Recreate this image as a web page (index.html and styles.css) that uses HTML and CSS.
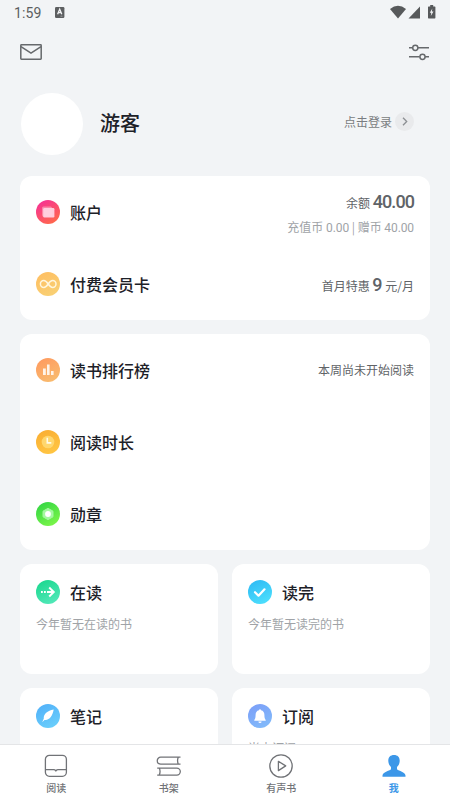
FILE: index.html
```html
<!DOCTYPE html>
<html lang="zh-CN">
<head>
<meta charset="utf-8">
<title>我的</title>
<link rel="stylesheet" href="styles.css">
</head>
<body>
<div class="app">
  <div class="status">
    <span class="time">1:59</span>
    <svg class="badge" width="10" height="11" viewBox="0 0 10 11"><rect width="9.4" height="11" rx="1.2" fill="#5d5f61"/><path d="M2.6 7.2 4.7 2.2l2.1 5M3.4 5.6h2.6" fill="none" stroke="#f3f4f6" stroke-width="1.3"/><path d="M5.5 9.2h2" stroke="#aeb0b2" stroke-width=".8"/></svg>
    <svg class="signals" width="46" height="14" viewBox="0 0 46 14" fill="#57595b"><path d="M0 4Q8-2.4 16 4L8 13.4Z"/><path d="M30 1.6V13.4H18.5Z"/><path d="M38.6 1.5h1.6V0h3v1.5h1.6q.6 0 .6.6V12.8q0 .6-.6.6h-6.200q-.6 0-.6-.6V2.100q0-.6.6-.6Z"/><path d="M42.300 3.500 39.800 7.800h1.500l-.5 3.200 2.700-4.500h-1.600Z" fill="#f3f4f6"/></svg>
  </div>
  <header class="tools">
    <svg width="22" height="16" viewBox="0 0 22 16" fill="none" stroke="#66696c" stroke-width="1.5"><rect x=".8" y=".8" width="20.4" height="14.4" rx=".6"/><path d="m1 2.6 10 6.6 10-6.6"/></svg>
    <svg width="21" height="17" viewBox="0 0 21 17" fill="none" stroke="#66696c" stroke-width="1.5"><path d="M0 3.800h3.700M8.900 3.800h11.100M0 12.800h10.700M16.100 12.800h3.900"/><circle cx="6.3" cy="3.8" r="2.6"/><circle cx="13.500" cy="12.8" r="2.6"/></svg>
  </header>
  <section class="profile">
    <div class="avatar"></div>
    <h1>游客</h1>
    <span class="login">点击登录</span>
    <span class="go"><svg width="6" height="9" viewBox="0 0 6 9" fill="none" stroke="#8c8f93" stroke-width="1.3"><path d="m1 .7 3.7 3.8L1 8.3"/></svg></span>
  </section>
  <section class="card account">
    <div class="row">
      <svg class="icon" viewBox="0 0 24 24"><defs><linearGradient id="pink" x2=".6" y2="1"><stop stop-color="#f52c9c"/><stop offset="1" stop-color="#ff664f"/></linearGradient></defs><circle cx="12" cy="12" r="12" fill="url(#pink)"/><rect x="6" y="6.5" width="10" height="10" rx="1.5" fill="#fff" opacity=".35"/><rect x="7.2" y="8" width="11.2" height="9.5" rx="1.2" fill="#ffd3e2" opacity=".95"/></svg>
      <h2>账户</h2>
      <div class="balance">
        <div class="dark">余额 <b>40.00</b></div>
        <div class="muted">充值币 <i>0.00</i> | 赠币 <i>40.00</i></div>
      </div>
    </div>
    <div class="row">
      <svg class="icon" viewBox="0 0 24 24"><defs><linearGradient id="gold" x2=".5" y2="1"><stop stop-color="#ffbd60"/><stop offset="1" stop-color="#f9cf73"/></linearGradient></defs><circle cx="12" cy="12" r="12" fill="url(#gold)"/><path d="M12.2 12c-1.6-2.3-2.6-3.4-4.4-3.4a3.4 3.4 0 0 0 0 6.8c1.8 0 2.8-1.1 4.4-3.4s2.6-3.4 4.4-3.4a3.4 3.4 0 0 1 0 6.8c-1.8 0-2.8-1.1-4.4-3.4Z" fill="none" stroke="#fff6dd" stroke-width="1.5"/></svg>
      <h2>付费会员卡</h2>
      <div class="dark offer">首月特惠 <b>9</b> 元/月</div>
    </div>
  </section>
  <section class="card stats">
    <div class="row">
      <svg class="icon" viewBox="0 0 24 24"><defs><linearGradient id="orange" x2=".5" y2="1"><stop stop-color="#ff985f"/><stop offset="1" stop-color="#f9b96d"/></linearGradient></defs><circle cx="12" cy="12" r="12" fill="url(#orange)"/><path d="M7 10.5h2.8V17H7zM11 6.5h2.6V17H11zM15 13h2.6v4H15z" fill="#fff4e8"/></svg>
      <h2>读书排行榜</h2>
      <div class="dark">本周尚未开始阅读</div>
    </div>
    <div class="row">
      <svg class="icon" viewBox="0 0 24 24"><defs><linearGradient id="amber" x2=".4" y2="1"><stop stop-color="#f9ac31"/><stop offset="1" stop-color="#ffc442"/></linearGradient></defs><circle cx="12" cy="12" r="12" fill="url(#amber)"/><circle cx="12" cy="12" r="6.3" fill="#ffd76e"/><path d="M11.3 7.8v5.1h4" fill="none" stroke="#fffbea" stroke-width="1.6"/></svg>
      <h2>阅读时长</h2>
    </div>
    <div class="row">
      <svg class="icon" viewBox="0 0 24 24"><defs><linearGradient id="green" x2=".6" y2="1"><stop stop-color="#2cd343"/><stop offset="1" stop-color="#78f449"/></linearGradient></defs><circle cx="12" cy="12" r="12" fill="url(#green)"/><path d="m12 6.300 5 2.900v5.600L12 17.700l-5-2.900V9.200Z" fill="#a4f8a0" stroke="#a4f8a0" stroke-linejoin="round"/><circle cx="12" cy="12" r="2.9" fill="#fff"/></svg>
      <h2>勋章</h2>
    </div>
  </section>
  <section class="grid">
    <article class="card tile">
      <div class="head"><svg class="icon" viewBox="0 0 24 24"><defs><linearGradient id="mint" x2=".5" y2="1"><stop stop-color="#16d68b"/><stop offset="1" stop-color="#4ee7b6"/></linearGradient></defs><circle cx="12" cy="12" r="12" fill="url(#mint)"/><path d="M5 12h1.8M8 12h1.8M11 12h6.4M13.2 7.5l4.6 4.5-4.6 4.5" fill="none" stroke="#fff" stroke-width="1.9"/></svg><h2>在读</h2></div>
      <p>今年暂无在读的书</p>
    </article>
    <article class="card tile">
      <div class="head"><svg class="icon" viewBox="0 0 24 24"><defs><linearGradient id="cyan" x2=".5" y2="1"><stop stop-color="#2bb8f4"/><stop offset="1" stop-color="#4bdcfc"/></linearGradient></defs><circle cx="12" cy="12" r="12" fill="url(#cyan)"/><path d="m7 12.2 3.5 3.5 6-6.4" fill="none" stroke="#fff" stroke-width="2.2" stroke-linecap="round" stroke-linejoin="round"/></svg><h2>读完</h2></div>
      <p>今年暂无读完的书</p>
    </article>
    <article class="card tile">
      <div class="head"><svg class="icon" viewBox="0 0 24 24"><defs><linearGradient id="sky" x2=".5" y2="1"><stop stop-color="#50aff9"/><stop offset="1" stop-color="#68ccfb"/></linearGradient></defs><circle cx="12" cy="12" r="12" fill="url(#sky)"/><path d="M17.7 5.600C11.5 6.700 7.300 10.200 7.800 14.600L6.200 18.200l2.300-2.300c5 .7 7.900-3.900 9.200-10.300Z" fill="#fff"/></svg><h2>笔记</h2></div>
    </article>
    <article class="card tile">
      <div class="head"><svg class="icon" viewBox="0 0 24 24"><defs><linearGradient id="blue" x2=".5" y2="1"><stop stop-color="#7b9df8"/><stop offset="1" stop-color="#81b8fa"/></linearGradient></defs><circle cx="12" cy="12" r="12" fill="url(#blue)"/><path d="M12 5.2a1 1 0 0 1 1 1c2.4.5 3.4 2.3 3.4 4.6 0 2.7.3 4 1.3 5.2v.8H6.3V16c1-1.2 1.3-2.5 1.3-5.2 0-2.3 1-4.1 3.4-4.6a1 1 0 0 1 1-1ZM10.4 17.4h3.2a1.6 1.6 0 0 1-3.2 0Z" fill="#fff"/></svg><h2>订阅</h2></div>
      <p>尚未订阅</p>
    </article>
  </section>
  <nav class="tabs">
    <div class="tab"><svg width="24" height="24" viewBox="0 0 24 24" fill="none" stroke="#717377" stroke-width="1.3"><rect x="1.4" y="1.3" width="21" height="21" rx="4"/><path d="M1.5 15.7h8.2c1.3 0 1.7.5 2.2 1.2.5-.7.9-1.2 2.2-1.2h8.2"/></svg><span>阅读</span></div>
    <div class="tab"><svg width="26" height="24" viewBox="0 0 26 24" fill="none" stroke="#717377" stroke-width="1.3"><path d="M24.500 3.200H4.700a3.400 3.400 0 0 0 0 6.900H24.500M22.300 3.200q-1.500 3.400 0 6.900M1.200 14.100h19.600a3.500 3.500 0 0 1 0 7H1.200M3.300 14.100q1.500 3.500 0 7"/></svg><span>书架</span></div>
    <div class="tab"><svg width="24" height="24" viewBox="0 0 24 24" fill="none" stroke="#717377" stroke-width="1.3"><circle cx="12" cy="12" r="11.2"/><path d="m9.4 7.3 7.3 4.6-7.3 4.7Z" stroke-linejoin="round"/></svg><span>有声书</span></div>
    <div class="tab active"><svg width="24" height="24" viewBox="0 0 24 24"><path d="M12 1c3.700 0 5.900 2.300 5.700 6.100-.1 2.600-1.300 4.600-2.700 6v2.200c2 1.900 8.100 2.600 8.500 6.300v1.100H.5v-1.100c.4-3.700 6.500-4.400 8.500-6.300v-2.200c-1.400-1.400-2.600-3.400-2.700-6C6.100 3.300 8.300 1 12 1Z" fill="#3c97e8"/></svg><span>我</span></div>
  </nav>
</div>
</body>
</html>
```
FILE: styles.css
```css
* { box-sizing: border-box; }
body { margin: 0; font-family: "Noto Sans CJK SC", sans-serif; background: #f2f4f6; }
h1, h2, p { margin: 0; }
svg { flex: none; display: block; }
.app { width: 450px; height: 800px; overflow: hidden; display: flex; flex-direction: column; background: #f2f4f6; }
.status { height: 25px; flex: none; display: flex; align-items: center; padding: 0 14px; color: #5c5e60; }
.time { font: 400 14px/25px Roboto, sans-serif; width: 41px; letter-spacing: 0.1px; padding-top: 1px; }
.badge { margin-top: -1px; }
.signals { margin-left: auto; margin-right: 0; margin-top: -1px; }
.tools { height: 54px; flex: none; display: flex; align-items: center; justify-content: space-between; padding: 0 20px; }
.profile { height: 90px; flex: none; display: flex; align-items: center; padding: 0 36px 0 21px; }
.avatar { width: 62px; height: 62px; border-radius: 50%; background: #fff; }
h1 { font-size: 20px; line-height: 28px; font-weight: 500; color: #1d2128; margin-left: 17px; margin-top: -3px; }
.login { margin-left: auto; margin-top: -5px; font-size: 12px; color: #7a7d81; }
.go { width: 19px; height: 19px; margin: -5px 0 0 3px; border-radius: 50%; background: #e9eaec; display: flex; align-items: center; justify-content: center; }
.card { background: #fff; border-radius: 12px; }
.account { flex: none; height: 144px; margin: 7px 20px 0; padding: 0 16px; }
.stats { flex: none; height: 216px; margin: 14px 20px; padding: 0 16px; }
.row { height: 72px; display: flex; align-items: center; justify-content: space-between; }
.icon { width: 24px; height: 24px; }
h2 { font-size: 16px; line-height: 24px; font-weight: 500; color: #1d2128; margin-left: 10px; margin-right: auto; }
.dark { font-size: 12px; line-height: 24px; color: #606367; }
.dark b { font: 500 18px/20px Roboto, sans-serif; letter-spacing: -0.95px; }
.balance { text-align: right; padding-top: 4px; }
.muted { font-size: 12px; line-height: 23px; color: #a0a3a7; }
.muted i { font: normal 12px Roboto, sans-serif; letter-spacing: -0.1px; }
.offer { padding-top: 4px; }
.offer b { font-size: 18px; letter-spacing: 0; }
.grid { flex: 1; min-height: 0; overflow: hidden; display: grid; grid-template-columns: 198px 198px; grid-auto-rows: 110px; gap: 14px; padding: 0 20px; }
.tile { padding: 16px; }
.head { display: flex; align-items: center; }
.tile p { margin-top: 10px; font-size: 12px; line-height: 20px; color: #a0a3a7; }
.tabs { position: relative; height: 56px; flex: none; background: #fff; border-top: 1px solid #e4e5e7; display: flex; }
.tab { flex: 1; display: flex; flex-direction: column; align-items: center; padding-top: 9px; color: #717377; }
.tab span { font-size: 10px; line-height: 14px; margin-top: 3px; font-weight: 500; }
.active { color: #3c97e8; }
.active span { font-weight: 700; }
```
